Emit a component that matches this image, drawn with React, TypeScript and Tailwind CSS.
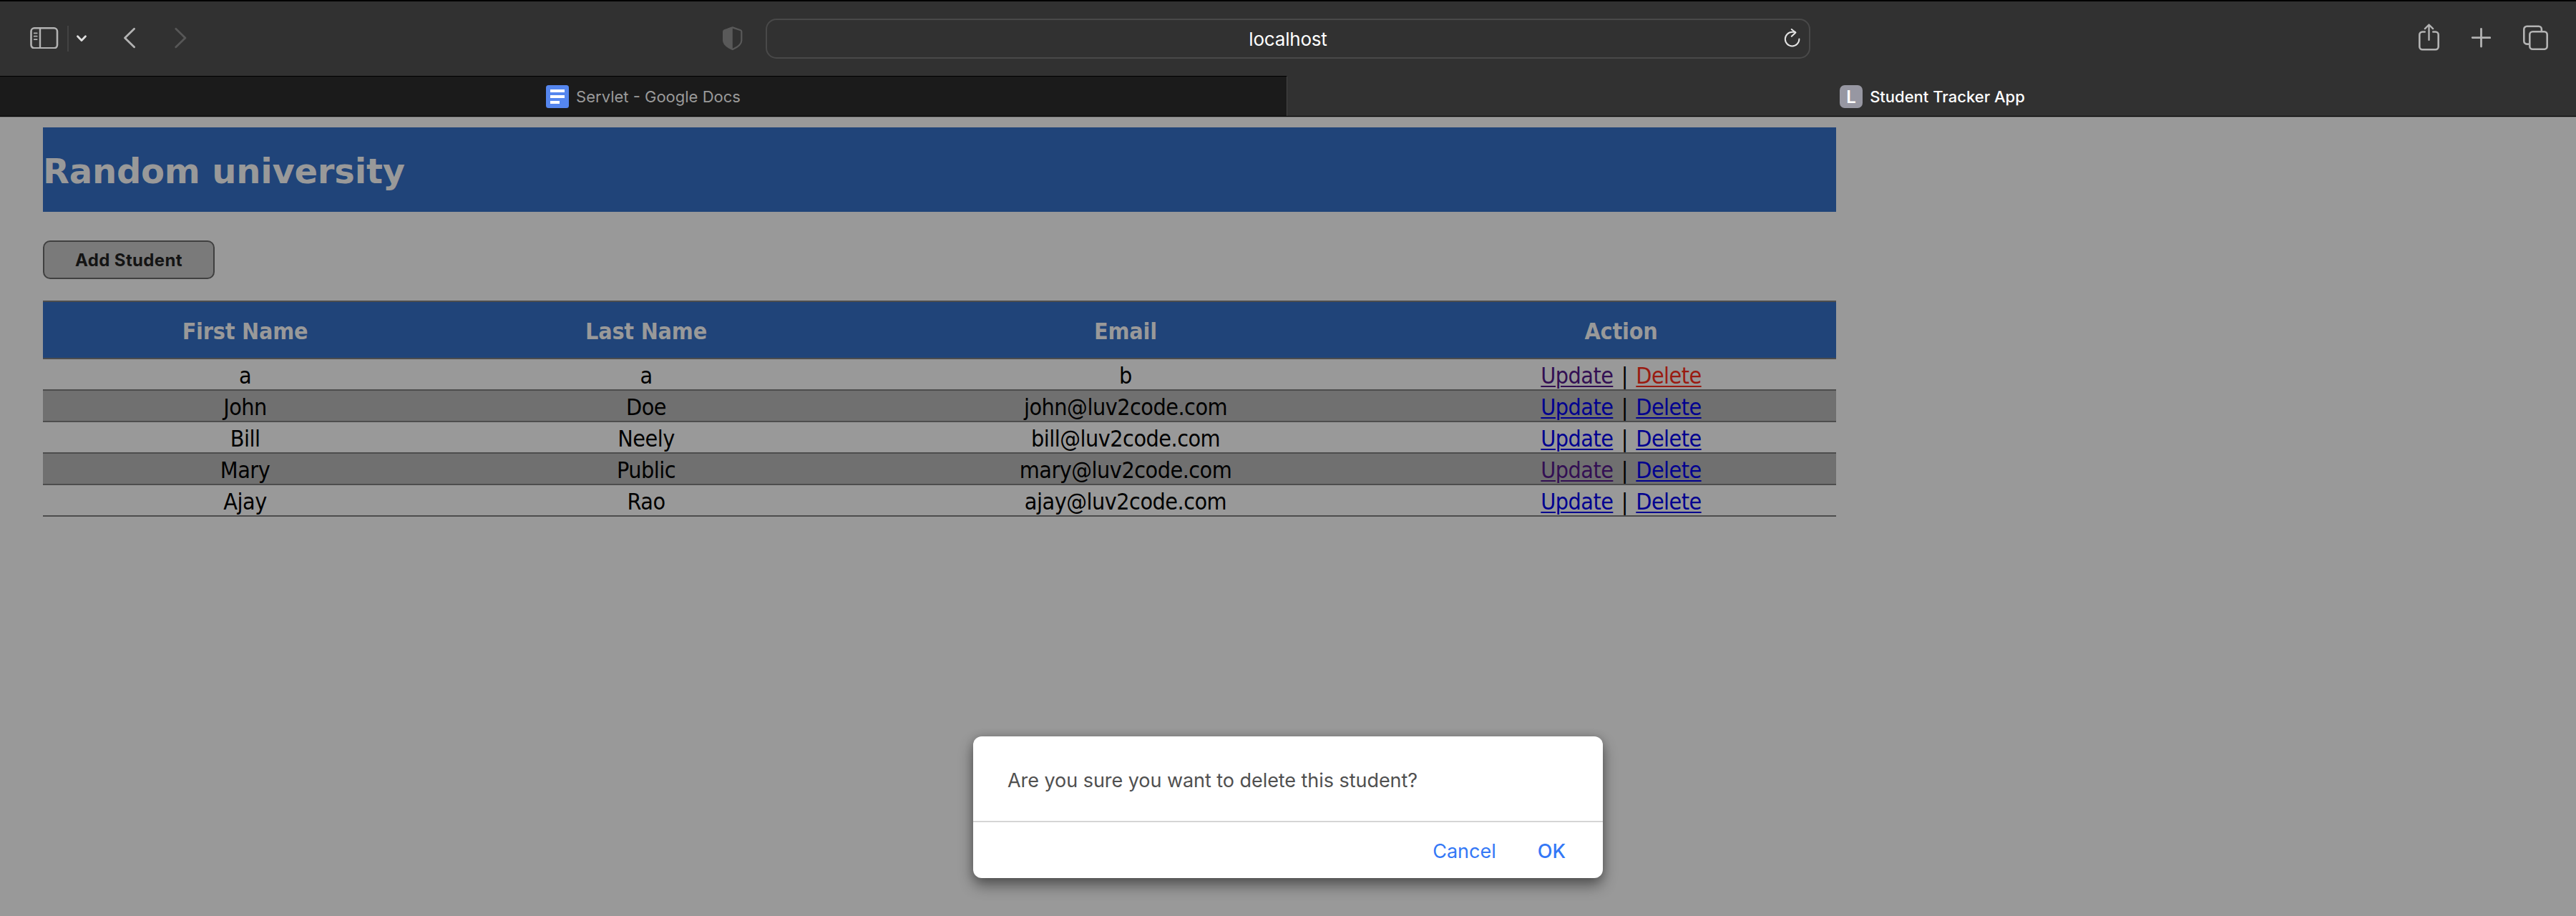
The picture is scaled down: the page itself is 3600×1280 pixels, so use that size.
type Student = { first: string; last: string; email: string; visited?: boolean; active?: boolean };

const students: Student[] = [
  { first: "a", last: "a", email: "b", visited: true, active: true },
  { first: "John", last: "Doe", email: "john@luv2code.com" },
  { first: "Bill", last: "Neely", email: "bill@luv2code.com" },
  { first: "Mary", last: "Public", email: "mary@luv2code.com", visited: true },
  { first: "Ajay", last: "Rao", email: "ajay@luv2code.com" },
];

function SidebarIcon() {
  return (
    <svg className="h-[32px] w-[40px]" viewBox="0 0 40 32" fill="none" stroke="#b3b3b3">
      <rect x="1.5" y="3.8" width="36.5" height="28" rx="4.5" strokeWidth="2.6" transform="translate(0 -.5)" />
      <path d="M14 3.5v28" strokeWidth="2.4" />
      <path d="M5.7 10.3h4M5.7 14.7h4M5.7 19.1h4" strokeWidth="1.8" strokeLinecap="round" />
    </svg>
  );
}

function ShareIcon() {
  return (
    <svg className="h-[38px] w-[30px]" viewBox="0 0 30 38" fill="none" stroke="#b3b3b3" strokeWidth="2.6" strokeLinecap="round" strokeLinejoin="round">
      <path d="M8.7 11.5H5.3A4 4 0 0 0 1.3 15.5V32.2A4 4 0 0 0 5.3 36.2H23.7A4 4 0 0 0 27.7 32.2V15.5A4 4 0 0 0 23.7 11.5H20.3" />
      <path d="M14.5 22.8V1.8M8.9 7.1L14.5 1.5L20.1 7.1" strokeWidth="2.4" />
    </svg>
  );
}

function TabsIcon() {
  return (
    <svg className="h-[36px] w-[36px]" viewBox="0 0 36 36" fill="none" stroke="#b3b3b3" strokeWidth="2.6">
      <rect x="9.3" y="9.3" width="24.4" height="24.4" rx="4" />
      <path d="M9.3 26.6H5.3A4 4 0 0 1 1.3 22.6V5.8A4 4 0 0 1 5.3 1.8H21.9A4 4 0 0 1 25.9 5.8V9.3" />
    </svg>
  );
}

function Toolbar() {
  return (
    <div className="flex h-[106px] items-start border-t-2 border-black bg-[#313131]">
      <div className="flex w-[1070px] items-start pl-[42px]">
        <div className="pt-[34px]"><SidebarIcon /></div>
        <div className="mt-[34px] ml-[12px] h-[36px] w-[2px] bg-[#434343]" />
        <svg className="mt-[44px] ml-[10px] h-[16px] w-[16px]" viewBox="0 0 16 16" fill="none" stroke="#e0e0e0" strokeWidth="2.8" strokeLinecap="round" strokeLinejoin="round">
          <path d="M2.5 4.8L8 10.4L13.5 4.8" />
        </svg>
        <svg className="mt-[35px] ml-[50px] h-[32px] w-[18px]" viewBox="0 0 18 32" fill="none" stroke="#b3b3b3" strokeWidth="2.8" strokeLinecap="round" strokeLinejoin="round">
          <path d="M15.6 3.2L2.5 16L15.6 28.8" />
        </svg>
        <svg className="mt-[35px] ml-[54px] h-[32px] w-[18px]" viewBox="0 0 18 32" fill="none" stroke="#575757" strokeWidth="2.8" strokeLinecap="round" strokeLinejoin="round">
          <path d="M1.8 3.2L14.9 16L1.8 28.8" />
        </svg>
        <svg className="mt-[35px] mr-[32px] ml-auto h-[34px] w-[28px]" viewBox="0 0 28 34" fill="none" stroke="#595959" strokeWidth="2.2" strokeLinejoin="round">
          <path d="M13.8 1.4L25 5.2Q26.3 5.8 26.3 7V19.5Q26.3 26.5 13.8 32Q1.1 26.5 1.1 19.5V7Q1.1 5.8 2.4 5.2Z" />
          <path d="M13.8 1.4V32Q1.1 26.5 1.1 19.5V7Q1.1 5.8 2.4 5.2Z" fill="#595959" stroke="none" />
        </svg>
      </div>
      <div className="mt-[24px] flex h-[56px] w-[1460px] items-center rounded-[15px] border-2 border-[#494949] pr-[10px] pl-[36px]">
        <span className="grow pt-[2px] text-center text-[26px] leading-[32px] tracking-[-0.2px] text-white">localhost</span>
        <svg className="h-[28px] w-[26px]" viewBox="0 0 26 28" fill="none" stroke="#e3e3e3" strokeWidth="2" strokeLinecap="round" strokeLinejoin="round">
          <path d="M22.4 14.6A9.8 9.8 0 1 1 12.6 4.8H16.8" />
          <path d="M11.8 0.9L17.4 5.6L11.8 10.8" />
        </svg>
      </div>
      <div className="mt-[31px] ml-auto flex items-start pr-[38px]">
        <ShareIcon />
        <svg className="mt-[6px] ml-[43px] h-[28px] w-[28px]" viewBox="0 0 28 28" stroke="#b3b3b3" strokeWidth="2.8" strokeLinecap="round">
          <path d="M14.5 1.5V26M2.2 13.6H26.8" />
        </svg>
        <div className="mt-[2px] ml-[45px]"><TabsIcon /></div>
      </div>
    </div>
  );
}

function TabBar() {
  return (
    <div className="flex h-[57px] border-b border-black text-[22px] leading-[28px]">
      <div className="flex w-[1799px] items-center justify-center gap-[10px] border-t border-r border-t-black border-r-[#454545] bg-[#1b1b1b] text-[#9a9a9a]">
        <svg className="h-[32px] w-[32px]" viewBox="0 0 32 32">
          <rect width="32" height="32" rx="3.5" fill="#5586ee" />
          <path d="M6 6h20v4H6zM6 14h20v4H6zM6 22h13v4H6z" fill="#fff" />
        </svg>
        <span>Servlet - Google Docs</span>
      </div>
      <div className="flex grow items-center justify-center gap-[10px] bg-[#313131] pt-px pl-[2px] font-medium text-white">
        <span className="flex size-[32px] items-center justify-center rounded-[7px] bg-[#9797a2] pt-[2px] text-[24px] font-semibold">L</span>
        <span>Student Tracker App</span>
      </div>
    </div>
  );
}

function StudentTable() {
  return (
    <table className="mt-[30px] w-[2506px] table-fixed border-collapse text-center font-['DejaVu_Sans_Condensed','DejaVu_Sans',sans-serif] text-[32px] leading-[38px] tracking-[-0.5px] text-black">
      <colgroup>
        <col className="w-[565px]" />
        <col className="w-[556px]" />
        <col className="w-[784px]" />
        <col className="w-[601px]" />
      </colgroup>
      <thead>
        <tr className="h-[80px] border-y-2 border-[#4d4d4d] bg-[#204479] tracking-[-0.2px] text-[#999999]">
          {["First Name", "Last Name", "Email", "Action"].map((h) => (
            <th key={h} className="p-0 pt-[3px] font-bold">{h}</th>
          ))}
        </tr>
      </thead>
      <tbody>
        {students.map((s) => (
          <tr key={s.first} className="h-[44px] border-b-2 border-[#4d4d4d] even:bg-[#707070]">
            <td className="p-0 pt-[3px]">{s.first}</td>
            <td className="p-0 pt-[3px]">{s.last}</td>
            <td className="p-0 pt-[3px]">{s.email}</td>
            <td className="p-0 pt-[3px]">
              <span className="flex items-baseline justify-center">
                <a href="#update" className={s.visited ? "tracking-[-0.55px] text-[#330f53] underline decoration-2 underline-offset-[3px]" : "tracking-[-0.55px] text-[#00008f] underline decoration-2 underline-offset-[3px]"}>Update</a>
                <span className="w-[32px] text-center">|</span>
                <a href="#delete" className={s.active ? "tracking-[-0.55px] text-[#991b11] underline decoration-2 underline-offset-[3px]" : "tracking-[-0.55px] text-[#00008f] underline decoration-2 underline-offset-[3px]"}>Delete</a>
              </span>
            </td>
          </tr>
        ))}
      </tbody>
    </table>
  );
}

function ConfirmDialog() {
  return (
    <div className="absolute top-[1029px] left-[1360px] flex h-[198px] w-[880px] flex-col rounded-[12px] bg-white text-[27px] leading-[34px] shadow-[0_10px_20px_rgba(0,0,0,0.45),0_0_12px_rgba(0,0,0,0.15)]">
      <div className="flex h-[120px] items-center border-b-2 border-[#d5d5d5] pt-[5px] pl-[48px] tracking-[-0.05px] text-[#505050]">
        Are you sure you want to delete this student?
      </div>
      <div className="flex grow items-center justify-end gap-[58px] pt-[3px] pr-[52px] text-[#3478f6]">
        <button>Cancel</button>
        <button className="font-medium">OK</button>
      </div>
    </div>
  );
}

export default function App() {
  return (
    <div className="relative h-[1280px] w-[3600px] overflow-hidden bg-[#999999] font-['Inter',sans-serif]">
      <Toolbar />
      <TabBar />
      <main className="border-t border-[#767676] pt-[14px] pl-[60px]">
        <h2 className="flex h-[118px] w-[2506px] items-center bg-[#204479] pt-[3px] font-['DejaVu_Sans',sans-serif] text-[48px] leading-[58px] font-bold tracking-[-0.2px] text-[#999999]">
          Random university
        </h2>
        <button className="mt-[40px] flex h-[54px] w-[240px] items-center justify-center rounded-[10px] border-2 border-[#404040] bg-[#7a7a7a] pt-px text-[24px] font-bold tracking-[0.35px] text-[#141414]">
          Add Student
        </button>
        <StudentTable />
      </main>
      <ConfirmDialog />
    </div>
  );
}
